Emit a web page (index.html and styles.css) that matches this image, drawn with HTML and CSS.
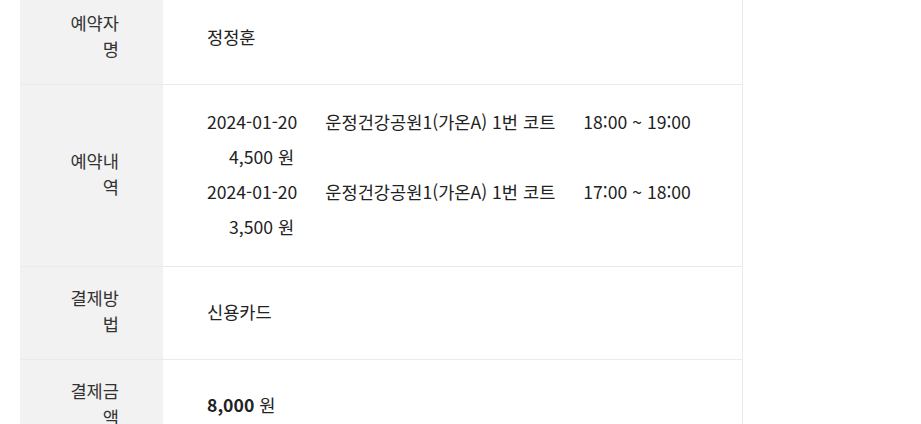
FILE: index.html
```html
<!DOCTYPE html>
<html lang="ko">
<head>
    <meta charset="UTF-8">
    <meta name="viewport" content="width=device-width, initial-scale=1.0">
    <title>예약 확인</title>
    <link rel="stylesheet" href="styles.css">
</head>
<body>
    <section class="confirm">
        <table class="info-table">
            <tbody>
                <tr>
                    <th>예약자명</th>
                    <td>정정훈</td>
                </tr>
                <tr>
                    <th>예약내역</th>
                    <td>
                        <div class="res-item">
                            <span class="res-date">2024-01-20</span>
                            <span class="res-place">운정건강공원1(가온A) 1번 코트</span>
                            <span class="res-time">18:00 ~ 19:00</span>
                            <span class="res-price">4,500 원</span>
                        </div>
                        <div class="res-item">
                            <span class="res-date">2024-01-20</span>
                            <span class="res-place">운정건강공원1(가온A) 1번 코트</span>
                            <span class="res-time">17:00 ~ 18:00</span>
                            <span class="res-price">3,500 원</span>
                        </div>
                    </td>
                </tr>
                <tr>
                    <th>결제방법</th>
                    <td>신용카드</td>
                </tr>
                <tr>
                    <th>결제금액</th>
                    <td><b>8,000</b> 원</td>
                </tr>
            </tbody>
        </table>
    </section>
</body>
</html>
```

FILE: styles.css
```css
* {margin:0;padding:0;box-sizing:border-box;}
body {background:#fff;color:#222;font-family:'Noto Sans CJK KR', 'Noto Sans', sans-serif;font-size:17.6px;}
.confirm {padding:0 20px;margin-top:-8px;}
.info-table {width:723px;border-collapse:collapse;border-right:1px solid #ebebeb;}
.info-table th, .info-table td {border-bottom:1px solid #ebebeb;vertical-align:middle;}
.info-table th {width:143px;background:#f2f2f2;color:#333;font-weight:400;text-align:right;padding:18px 44px 22px 36px;line-height:26px;word-break:break-all;}
.info-table td {padding:19px 20px 22px 44px;line-height:35px;}
.res-item span {display:inline-block;margin-right:23px;}
.res-item .res-price {margin-left:22px;}
```
